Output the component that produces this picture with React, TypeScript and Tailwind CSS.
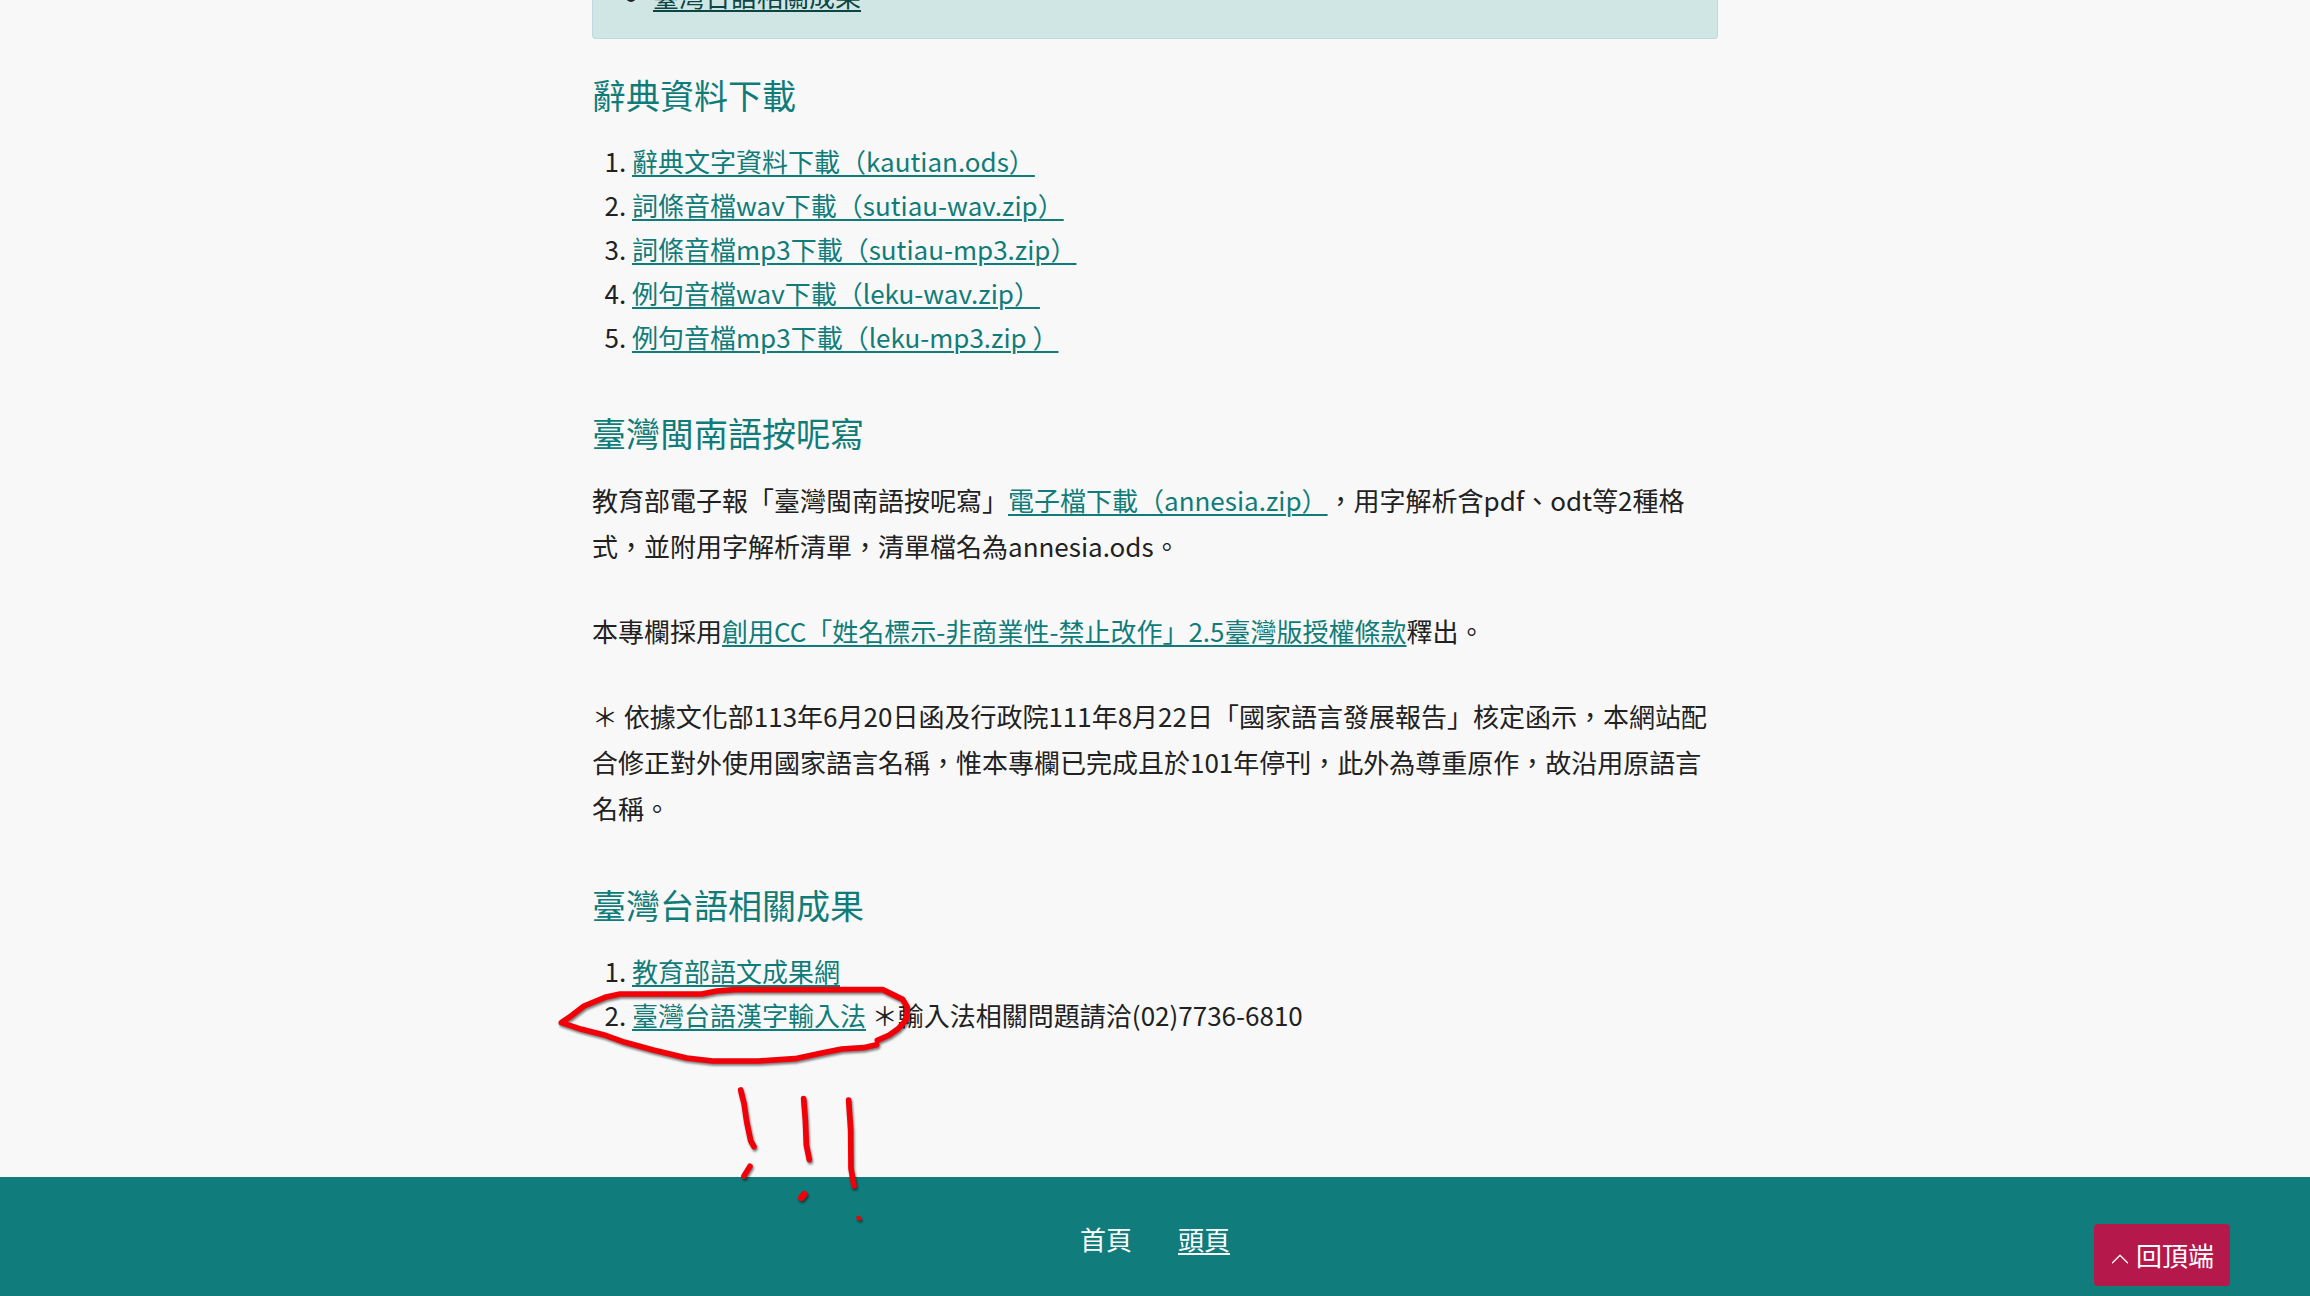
import React from "react";
import { BsChevronUp } from "react-icons/bs";

const downloads = [
    "辭典文字資料下載（kautian.ods）",
    "詞條音檔wav下載（sutiau-wav.zip）",
    "詞條音檔mp3下載（sutiau-mp3.zip）",
    "例句音檔wav下載（leku-wav.zip）",
    "例句音檔mp3下載（leku-mp3.zip ）",
];

function TextLink({ children }: { children: React.ReactNode }) {
    return (
        <a href="#" className="text-[#107c79] underline decoration-2 underline-offset-3 hover:text-[#0a5957]">
            {children}
        </a>
    );
}

function SectionTitle({ children }: { children: React.ReactNode }) {
    return <h2 className="text-[34px] leading-10 mb-6 text-[#107c79]">{children}</h2>;
}

// Hand-drawn red circle and three exclamation marks
function Scribble() {
    return (
        <svg
            className="absolute z-10 -left-[52px] -top-[15px] w-[480px] h-[400px] pointer-events-none drop-shadow-[1px_2px_1px_rgba(0,0,0,0.5)]"
            viewBox="0 0 1440 1200"
            fill="none"
            stroke="#f20008"
            strokeWidth="17"
            strokeLinecap="round"
            strokeLinejoin="round"
            aria-hidden="true"
        >
            <path d="M1010 524 L970 533 L905 537 L845 549 L765 566 L655 573 L518 573 L440 564 L340 540 L255 517 L190 494 L125 478 L64 458 L96 436 L132 408 L195 382 L240 372 L485 372 L530 363 L585 359 L1028 359 L1088 388 L1102 412 L1100 448 L1075 476 L1048 495 L1012 511" />
            <path d="M602 660 L612 700 L620 755 L632 812 L642 830" />
            <path d="M791 686 L796 750 L799 825 L808 869" />
            <path d="M926 690 L932 780 L933 895 L942 948" />
            <path d="M630 889 L612 918" />
            <path d="M793 973 L784 983" strokeWidth="20" />
            <path d="M955 1043 L959 1046" strokeWidth="12" />
        </svg>
    );
}

export default function App() {
    return (
        <div
            lang="zh-Hant"
            className="min-h-screen flex flex-col bg-[#f8f8f8] text-[#212121] text-[26px] leading-[44px] font-['Noto_Sans_CJK_TC',sans-serif] [text-spacing-trim:space-all]"
        >
            <main className="w-full max-w-[1126px] mx-auto grow">
                <nav className="h-[39px] flex flex-col justify-end overflow-hidden rounded-b bg-[#d0e6e4] border border-t-0 border-[#bfd9df] pb-5">
                    <ul className="list-disc pl-[60px]">
                        <li>
                            <a href="#related" className="text-[#0b4645] underline decoration-2 underline-offset-3">臺灣台語相關成果</a>
                        </li>
                    </ul>
                </nav>

                <section className="mt-9">
                    <SectionTitle>辭典資料下載</SectionTitle>
                    <ol className="list-decimal pl-10">
                        {downloads.map((name) => (
                            <li key={name}><TextLink>{name}</TextLink></li>
                        ))}
                    </ol>
                </section>

                <section className="mt-[54px]">
                    <SectionTitle>臺灣閩南語按呢寫</SectionTitle>
                    <div className="flex flex-col gap-[39px] leading-[46px]">
                        <p>
                            教育部電子報「臺灣閩南語按呢寫」<TextLink>電子檔下載（annesia.zip）</TextLink>，用字解析含pdf、odt等2種格式，並附用字解析清單，清單檔名為annesia.ods。
                        </p>
                        <p>
                            本專欄採用<TextLink>創用CC「姓名標示-非商業性-禁止改作」2.5臺灣版授權條款</TextLink>釋出。
                        </p>
                        <p>
                            ＊ 依據文化部113年6月20日函及行政院111年8月22日「國家語言發展報告」核定函示，本網站配合修正對外使用國家語言名稱，惟本專欄已完成且於101年停刊，此外為尊重原作，故沿用原語言名稱。
                        </p>
                    </div>
                </section>

                <section id="related" className="relative mt-[54px] pb-32">
                    <SectionTitle>臺灣台語相關成果</SectionTitle>
                    <ol className="list-decimal pl-10">
                        <li><TextLink>教育部語文成果網</TextLink></li>
                        <li><TextLink>臺灣台語漢字輸入法</TextLink> ＊輸入法相關問題請洽(02)7736-6810</li>
                    </ol>
                    <Scribble />
                </section>
            </main>

            <footer className="flex justify-center gap-[46px] pt-10 pb-[35px] bg-[#107c7b] text-white">
                <span>首頁</span>
                <a href="#" className="underline decoration-2 underline-offset-3">頭頁</a>
            </footer>

            <button
                type="button"
                className="fixed right-20 bottom-2.5 flex items-center gap-1.5 rounded bg-[#b5194c] text-white px-4 py-[9px] cursor-pointer"
            >
                <BsChevronUp className="mt-2" size={20} />
                回頂端
            </button>
        </div>
    );
}
